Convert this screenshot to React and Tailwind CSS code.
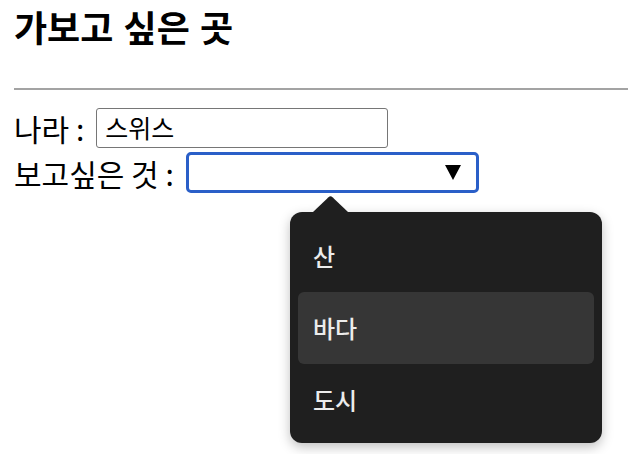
export default function App() {
  const items = ["산", "바다", "도시"];
  return (
    <div className="relative h-[454px] w-[628px] overflow-hidden bg-white pl-[14px] text-black [font-family:'Noto_Sans_CJK_KR','Noto_Sans',sans-serif]">
      <h3 className="pt-[6px] text-[36px] font-bold leading-[40px] [word-spacing:2px]">가보고 싶은 곳</h3>
      <hr className="mt-[42px] h-[2px] border-0 bg-[#a3a3a3]" />

      <div className="mt-[18px] flex h-[40px] items-center">
        <span className="text-[30px] leading-none">나라 :</span>
        <div className="ml-[12px] flex h-[40px] w-[292px] items-center rounded-[3px] border-[1.5px] border-[#767676] pl-[8px] text-[25px]">
          스위스
        </div>
      </div>

      <div className="mt-[4px] flex h-[41px] items-center">
        <span className="text-[30px] leading-none">보고싶은 것 :</span>
        <div className="ml-[12px] flex h-[41px] w-[293px] items-center justify-end rounded-[5px] border-[3px] border-[#2a5fc8] pr-[15px]">
          <svg width="16" height="15" viewBox="0 0 16 15">
            <polygon points="0,0 16,0 8,15" fill="#000" />
          </svg>
        </div>
      </div>

      {/* dropdown popup */}
      <div className="absolute left-[290px] top-[196px] w-[312px]">
        <svg className="ml-[23px] block" width="35" height="16" viewBox="0 0 35 16">
          <path d="M0 16 L15.5 1.2 Q17.5 -0.5 19.5 1.2 L35 16 Z" fill="#1f1f1f" />
        </svg>
        <div className="rounded-[12px] bg-[#1f1f1f] p-[8px] pb-[7px] shadow-[0_4px_12px_rgba(0,0,0,0.25)]">
          {items.map((t, i) => (
            <div
              key={t}
              className={
                "flex h-[72px] items-center rounded-[6px] px-[15px] text-[24px] font-medium text-[#ececec] " +
                (i === 1 ? "bg-[#363636]" : "")
              }
            >
              {t}
            </div>
          ))}
        </div>
      </div>
    </div>
  );
}
